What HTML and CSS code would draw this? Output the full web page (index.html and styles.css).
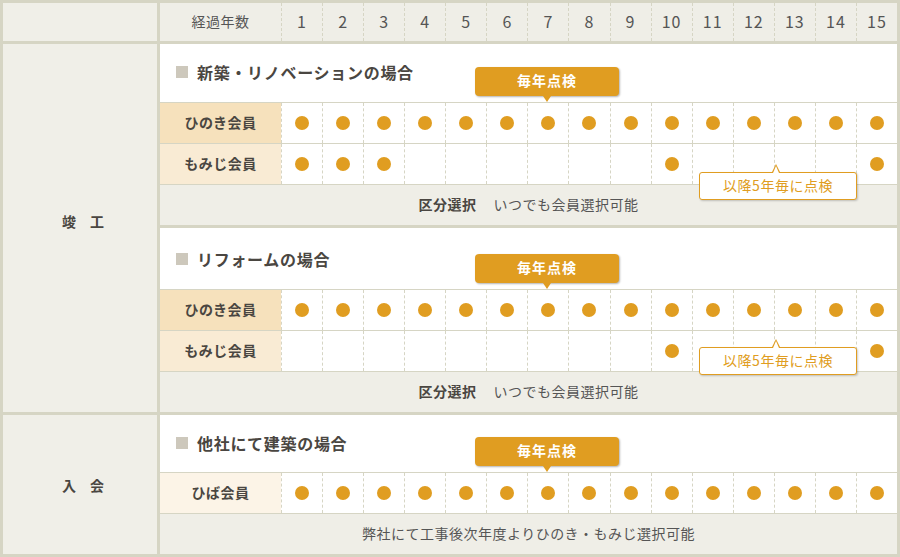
FILE: index.html
```html
<!DOCTYPE html>
<html lang="ja">
<head>
    <meta charset="UTF-8">
    <meta name="viewport" content="width=device-width, initial-scale=1.0">
    <title>会員点検スケジュール</title>
    <link rel="stylesheet" href="styles.css">
</head>
<body>
    <div class="chart">
        <div class="corner"></div>
        <div class="years">
            <div class="years-label">経過年数</div>
            <span>1</span><span>2</span><span>3</span><span>4</span><span>5</span>
            <span>6</span><span>7</span><span>8</span><span>9</span><span>10</span>
            <span>11</span><span>12</span><span>13</span><span>14</span><span>15</span>
        </div>

        <div class="stage stage-build">竣　工</div>

        <!-- 新築・リノベーション -->
        <section class="plan plan-new">
            <div class="plan-head">
                <h2 class="plan-title">新築・リノベーションの場合</h2>
                <div class="tip">毎年点検</div>
            </div>
            <div class="row">
                <div class="member hinoki">ひのき会員</div>
                <span class="c on"></span><span class="c on"></span><span class="c on"></span><span class="c on"></span><span class="c on"></span>
                <span class="c on"></span><span class="c on"></span><span class="c on"></span><span class="c on"></span><span class="c on"></span>
                <span class="c on"></span><span class="c on"></span><span class="c on"></span><span class="c on"></span><span class="c on"></span>
            </div>
            <div class="row">
                <div class="member momiji">もみじ会員</div>
                <span class="c on"></span><span class="c on"></span><span class="c on"></span><span class="c"></span><span class="c"></span>
                <span class="c"></span><span class="c"></span><span class="c"></span><span class="c"></span><span class="c on"></span>
                <span class="c"></span><span class="c"></span><span class="c"></span><span class="c"></span><span class="c on"></span>
            </div>
            <p class="note"><b>区分選択</b>いつでも会員選択可能</p>
            <div class="tip-sub">以降5年毎に点検</div>
        </section>

        <!-- リフォーム -->
        <section class="plan plan-reform">
            <div class="plan-head">
                <h2 class="plan-title">リフォームの場合</h2>
                <div class="tip">毎年点検</div>
            </div>
            <div class="row">
                <div class="member hinoki">ひのき会員</div>
                <span class="c on"></span><span class="c on"></span><span class="c on"></span><span class="c on"></span><span class="c on"></span>
                <span class="c on"></span><span class="c on"></span><span class="c on"></span><span class="c on"></span><span class="c on"></span>
                <span class="c on"></span><span class="c on"></span><span class="c on"></span><span class="c on"></span><span class="c on"></span>
            </div>
            <div class="row">
                <div class="member momiji">もみじ会員</div>
                <span class="c"></span><span class="c"></span><span class="c"></span><span class="c"></span><span class="c"></span>
                <span class="c"></span><span class="c"></span><span class="c"></span><span class="c"></span><span class="c on"></span>
                <span class="c"></span><span class="c"></span><span class="c"></span><span class="c"></span><span class="c on"></span>
            </div>
            <p class="note"><b>区分選択</b>いつでも会員選択可能</p>
            <div class="tip-sub">以降5年毎に点検</div>
        </section>

        <div class="stage stage-join">入　会</div>

        <!-- 他社施工 -->
        <section class="plan plan-other">
            <div class="plan-head">
                <h2 class="plan-title">他社にて建築の場合</h2>
                <div class="tip">毎年点検</div>
            </div>
            <div class="row">
                <div class="member hiba">ひば会員</div>
                <span class="c on"></span><span class="c on"></span><span class="c on"></span><span class="c on"></span><span class="c on"></span>
                <span class="c on"></span><span class="c on"></span><span class="c on"></span><span class="c on"></span><span class="c on"></span>
                <span class="c on"></span><span class="c on"></span><span class="c on"></span><span class="c on"></span><span class="c on"></span>
            </div>
            <p class="note">弊社にて工事後次年度よりひのき・もみじ選択可能</p>
        </section>
    </div>
</body>
</html>
```

FILE: styles.css
```css
body {
    margin: 0;
    font-family: "Noto Sans CJK JP", "Noto Sans", sans-serif;
    color: #4a4641;
    background: #fff;
}
.chart {
    width: 900px;
    box-sizing: border-box;
    padding: 3px;
    display: grid;
    grid-template-columns: 154px 737px;
    grid-template-rows: 38px 181px 184px 139px;
    gap: 3px;
    background: #d6d5c4;
}
.corner {
    background: #f0efe8;
}
.years {
    display: grid;
    grid-template-columns: 121px repeat(15, 1fr);
    background: #efeee7;
    color: #555;
}
.years-label,
.years span {
    display: flex;
    align-items: center;
    justify-content: center;
    padding-bottom: 2px;
}
.years-label {
    font-size: 14px;
    letter-spacing: 0.5px;
}
.years span {
    border-left: 1px dashed #d6d5c4;
    font-size: 16px;
    letter-spacing: 1px;
}
.stage {
    background: #f0efe8;
    display: flex;
    align-items: center;
    justify-content: center;
    padding-left: 6px;
    font-size: 14px;
    font-weight: bold;
}
.stage-build {
    grid-row: 2 / 4;
    padding-bottom: 14px;
}
.stage-join {
    padding-top: 1px;
}
.plan {
    position: relative;
    background: #fff;
    display: flex;
    flex-direction: column;
}
.plan-head {
    position: relative;
    flex: 1;
    display: flex;
    align-items: center;
    padding-left: 16px;
    padding-bottom: 2px;
}
.plan-title {
    margin: 0;
    font-size: 16px;
    letter-spacing: 0.7px;
    display: flex;
    align-items: center;
}
.plan-title::before {
    content: "";
    width: 12px;
    height: 12px;
    margin-right: 9px;
    background: #cdc8bc;
}
.plan-reform .plan-head {
    padding-top: 2px;
}
.tip {
    position: absolute;
    left: 315px;
    bottom: 6px;
    width: 144px;
    height: 29px;
    line-height: 27px;
    text-align: center;
    background: #e09d21;
    color: #fff;
    font-size: 14px;
    font-weight: bold;
    letter-spacing: 1px;
    border-radius: 4px;
    box-shadow: 1px 1px 2px rgba(0,0,0,0.3);
}
.tip::after {
    content: "";
    position: absolute;
    left: 68px;
    bottom: -6px;
    border-top: 6px solid #e09d21;
    border-left: 4px solid transparent;
    border-right: 4px solid transparent;
}
.row {
    display: grid;
    grid-template-columns: 121px repeat(15, 1fr);
    height: 41px;
    box-sizing: border-box;
    border-top: 1px solid #d6d5c4;
}
.member {
    display: flex;
    align-items: center;
    justify-content: center;
    padding-bottom: 2px;
    font-size: 14px;
    font-weight: bold;
    letter-spacing: 0.5px;
}
.hinoki {
    background: #f6e1bc;
}
.momiji {
    background: #f9ebd4;
}
.hiba {
    background: #fcf4e7;
}
.c {
    border-left: 1px dashed #d6d5c4;
    display: flex;
    align-items: center;
    justify-content: center;
}
.c.on::after {
    content: "";
    width: 14px;
    height: 14px;
    border-radius: 50%;
    background: #e09d21;
}
.note {
    margin: 0;
    height: 41px;
    box-sizing: border-box;
    padding-bottom: 2px;
    border-top: 1px solid #d6d5c4;
    background: #efeee7;
    display: flex;
    align-items: center;
    justify-content: center;
    font-size: 14px;
    letter-spacing: 0.5px;
    color: #555;
}
.note b {
    color: #4a4641;
    margin-right: 17px;
}
.tip-sub {
    position: absolute;
    left: 539px;
    top: 128px;
    width: 158px;
    height: 28px;
    box-sizing: border-box;
    padding-bottom: 2px;
    border: 1px solid #e09d21;
    border-radius: 3px;
    background: #fff;
    color: #e09d21;
    font-size: 14px;
    letter-spacing: 0.5px;
    display: flex;
    align-items: center;
    justify-content: center;
    box-shadow: 1px 1px 2px rgba(0,0,0,0.2);
}
.tip-sub::before,
.tip-sub::after {
    content: "";
    position: absolute;
    left: 72px;
    border-left: 4px solid transparent;
    border-right: 4px solid transparent;
}
.tip-sub::before {
    top: -9px;
    border-bottom: 8px solid #e09d21;
}
.tip-sub::after {
    top: -7px;
    left: 73px;
    border-left-width: 3px;
    border-right-width: 3px;
    border-bottom: 7px solid #fff;
}
.plan-reform .tip-sub {
    top: 119px;
}
```
